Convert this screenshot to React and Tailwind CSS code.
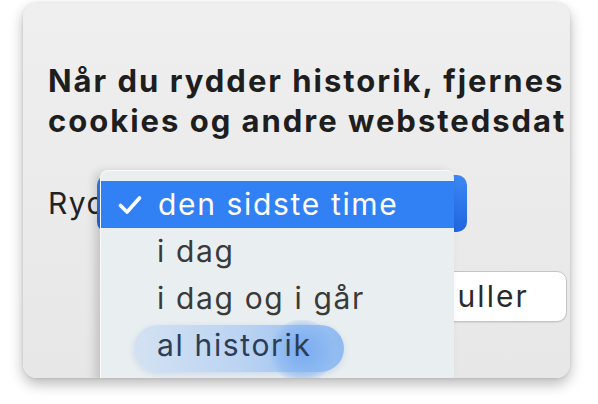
import React from "react";

export default function App() {
  const font = { fontFamily: "Inter, 'Liberation Sans', sans-serif" };
  return (
    <div className="w-[598px] h-[404px] bg-white pt-[3px] pl-[23px]" style={font}>
      <div className="relative w-[547px] h-[375px] rounded-[14px] bg-gradient-to-b from-[#efefef] to-[#e7e7e7] overflow-hidden shadow-[0_6px_14px_rgba(0,0,0,0.28),0_0_3px_rgba(0,0,0,0.12)]">
        <div className="pt-[58px] pl-[25px] pr-[3px]">
          <p className="text-[31px] font-bold leading-[40px] whitespace-nowrap text-[#1e1e1e] tracking-[0.064em]">
            Når du rydder historik, fjernes
            <br />
            cookies og andre webstedsdat
          </p>
          <div className="mt-[34px] flex items-center">
            <span className="w-[49px] text-[30px] leading-[57px] text-[#222] whitespace-nowrap tracking-[0.05em]">Ryd:</span>
            <div className="w-[370px] h-[57px] rounded-[10px] bg-gradient-to-b from-[#3d87f5] to-[#1f66e0]" />
          </div>
          <div className="mt-[39px] flex justify-end">
            <button className="w-[210px] h-[51px] rounded-[10px] bg-white border border-[#c4c4c4] text-[30px] text-[#2a2a2a] tracking-[0.07em] shadow-[0_1px_1px_rgba(0,0,0,0.08)]">
              Annuller
            </button>
          </div>
        </div>

        <div className="absolute left-[77px] top-[167px] w-[354px] h-[210px] rounded-t-[8px] bg-[#e9eef0] border-t border-l border-[#fafafa] shadow-[-5px_2px_10px_rgba(0,0,0,0.16)] pt-[10px] text-[30px] text-[#3a3a3a]">
          <div className="h-[47px] bg-[#3281f4] flex items-center text-white">
            <svg width="24" height="20" viewBox="0 0 24 20" className="ml-[17px]">
              <path d="M2.5 10.5 L9 17 L21.5 3" fill="none" stroke="white" strokeWidth="3.6" strokeLinecap="round" strokeLinejoin="round" />
            </svg>
            <span className="ml-[16px] leading-[47px] whitespace-nowrap tracking-[0.055em]">den sidste time</span>
          </div>
          <div className="h-[47px] pl-[56px] leading-[47px] whitespace-nowrap tracking-[0.055em]">i dag</div>
          <div className="h-[47px] pl-[56px] leading-[47px] whitespace-nowrap tracking-[0.055em]">i dag og i går</div>
          <div className="relative h-[47px] pl-[56px] leading-[47px] whitespace-nowrap tracking-[0.055em]">
            <div className="absolute left-[33px] top-[3px] w-[210px] h-[47px] rounded-full bg-gradient-to-r from-[#d3e2f2] via-[#bcd4f2] to-[#8fbaf0] shadow-[0_2px_6px_rgba(60,120,220,0.18)]" />
            <div className="absolute left-[168px] top-[-2px] w-[66px] h-[62px] rounded-full bg-[radial-gradient(circle,rgba(110,165,240,0.8)_0%,rgba(130,178,242,0.5)_55%,rgba(150,190,245,0)_75%)]" />
            <span className="relative text-[#2c3d55]">al historik</span>
          </div>
        </div>
      </div>
    </div>
  );
}
